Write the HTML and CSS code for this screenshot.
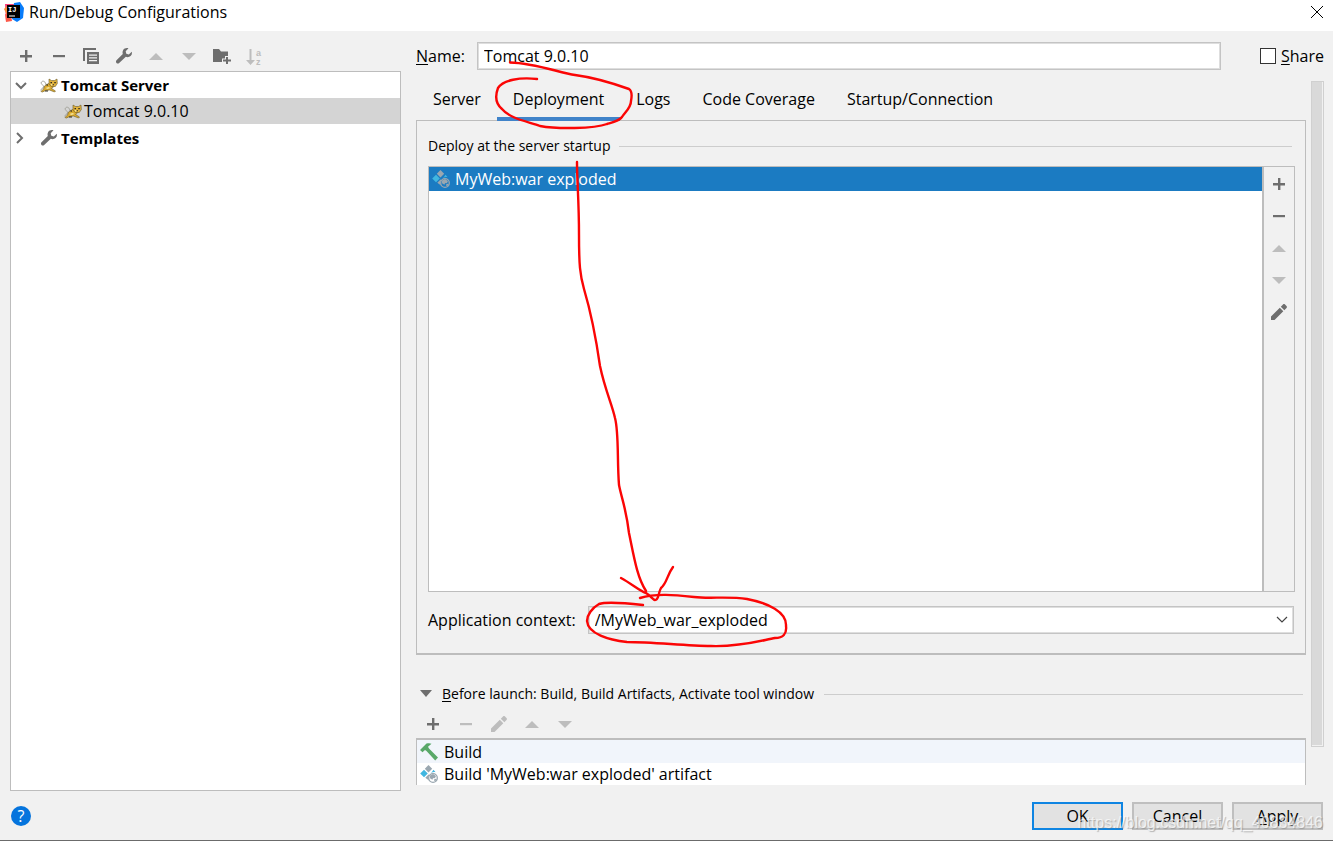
FILE: index.html
```html
<!DOCTYPE html>
<html lang="en">
<head>
    <meta charset="UTF-8">
    <meta name="viewport" content="width=device-width, initial-scale=1.0">
    <title>Run/Debug Configurations</title>
    <link rel="stylesheet" href="styles.css">
</head>
<body>

    <!-- Shared icons -->
    <svg class="hidden">
        <symbol id="plus" viewBox="0 0 16 16"><path d="M7 2h2.4v5H14v2.4H9.4V14H7V9.400H2V7h5z" fill="currentColor"/></symbol>
        <symbol id="minus" viewBox="0 0 16 16"><path d="M2 7h12v2.200H2z" fill="currentColor"/></symbol>
        <symbol id="up" viewBox="0 0 16 16"><path d="M1 12L8 5l7 7z" fill="currentColor"/></symbol>
        <symbol id="down" viewBox="0 0 16 16"><path d="M1 5h14l-7 7z" fill="currentColor"/></symbol>
        <symbol id="copy" viewBox="0 0 16 16"><path d="M0 0h13v2H2v11H0z" fill="currentColor"/><path d="M4 4h12v12H4zM6 6.500v1.300h8V6.500zM6 9.300v1.300h8V9.300zM6 12v1.300h8V12z" fill="currentColor" fill-rule="evenodd"/></symbol>
        <symbol id="wrench" viewBox="0 0 16 16"><path d="M15.800 3.800L12.800 6.500 10.300 5.800 9.700 3.200 12.500.3C10.500-.4 8.300.2 7.200 2 6.400 3.300 6.400 4.700 6.800 6L.5 12.300c-.8.8-.7 1.900 0 2.700s1.900.8 2.700 0L9.800 8.800c1.600.7 3.500.4 4.800-.8 1.200-1.200 1.600-2.800 1.200-4.200z" fill="currentColor"/></symbol>
        <symbol id="pencil" viewBox="0 0 16 16"><path d="M0 12.500L8.800 3.700l3.500 3.500L3.500 16H0zM9.800 2.700L12 .5c.6-.6 1.400-.6 2 0L15.500 2c.6.600.6 1.400 0 2l-2.200 2.200z" fill="currentColor"/></symbol>
        <symbol id="tomcat" viewBox="0 0 18 16">
            <path d="M6 8C6 5 3 3 1.500 5S4 8 3.500 10 1 11 .8 13.500" fill="none" stroke="#a3a39b"/>
            <path d="M4.500 9l4-2.500 2 .5 3 3-2 1.500 4 2.500-1 1-5-2-4 .5L2.500 15l-1.500-.5L3.500 12z" fill="#d9a92f" stroke="#6b5a2a" stroke-width=".6"/>
            <path d="M9 2l2.500 1.500h3L17 2l.3 4.500-2 3h-4L9 7z" fill="#e2b33c" stroke="#6b5a2a" stroke-width=".6"/>
            <path d="M10.500 5H12v1.300h-1.500zM14.300 5h1.500v1.300h-1.500zM12.500 7.300H14v1h-1.500zM6 8l1.500-1 .5 2zM5 13.500h3v1H5z" fill="#2e2a20"/>
            <path d="M5.500 11l3-1 2 1-3 1zM11 7h1.300v1.500H11z" fill="#f8e69a"/>
        </symbol>
        <symbol id="artifact" viewBox="0 0 18 18">
            <path d="M8.500 0l3.700 3.700-3.700 3.700-3.700-3.700z" fill="#9aa7b0"/>
            <path d="M4 4.700l3.800 3.800L4 12.300.2 8.500zM13.500 4.800l2.200 2.400c-1.600-.4-3.300 0-4.700 1z" fill="#40b6e0"/>
            <path d="M8.500 9.500l1 .6c-1.200 1.500-1.300 3.600-.5 5.400L5.300 12.700z" fill="#9aa7b0"/>
            <circle cx="13" cy="13" r="4.300" fill="none" stroke="#9aa7b0" stroke-width="1.300"/>
            <path d="M10 10.500l3-1.500 3 2-1 2-2 .2-.6 1.600-2.400-1.500zM14.500 13.700l2.300.2-1.500 2.400-1.300-.7z" fill="#9aa7b0"/>
        </symbol>
    </svg>

    <!-- Title bar -->
    <header class="title-bar">
        <svg class="app-icon" viewBox="0 0 20 20">
            <path d="M1 2l9 0-3 16-5 1z" fill="#f9417a"/>
            <path d="M10 1l6-1 4 6-1 10-6 4-5-3z" fill="#087cfa"/>
            <path d="M1 12l6 2 1 5-6 1z" fill="#fc5a4a"/>
            <path d="M0 7l3-3v9z" fill="#fb8a38"/>
            <rect x="3" y="3" width="13" height="13"/>
            <text class="app-letters" x="4" y="10">IJ</text>
            <path d="M5 13.500h6v1H5z" fill="#fff"/>
        </svg>
        <span>Run/Debug Configurations</span>
        <button class="close-button" aria-label="Close">
            <svg viewBox="0 0 12 12"><path d="M0 0l12 12M12 0L0 12" stroke="#000"/></svg>
        </button>
    </header>

    <main class="content">

        <!-- Configurations tree -->
        <aside class="sidebar">
            <div class="toolbar side-tools">
                <button class="tool" aria-label="Add"><svg><use href="#plus"/></svg></button>
                <button class="tool" aria-label="Remove"><svg><use href="#minus"/></svg></button>
                <button class="tool" aria-label="Copy"><svg><use href="#copy"/></svg></button>
                <button class="tool" aria-label="Edit templates"><svg><use href="#wrench"/></svg></button>
                <button class="tool" aria-label="Move up" disabled><svg><use href="#up"/></svg></button>
                <button class="tool" aria-label="Move down" disabled><svg><use href="#down"/></svg></button>
                <button class="tool" aria-label="New folder">
                    <svg class="wide" viewBox="0 0 18 16"><path d="M0 1h6l2 2.500h7V8h-3v2.500H9V14H0z" fill="currentColor"/><path d="M13 9h2v2.500h3v2h-3V16h-2v-2.500h-3v-2h3z" fill="currentColor"/></svg>
                </button>
                <button class="tool" aria-label="Sort" disabled>
                    <svg class="sort-icon" viewBox="0 0 16 18"><path d="M3.500 1h2v11H9l-4.500 5L0 12h3.500z" fill="currentColor"/><text class="sort-letters" x="10" y="8">a</text><text class="sort-letters" x="10" y="17">z</text></svg>
                </button>
            </div>
            <ul class="tree">
                <li class="tree-row bold">
                    <svg class="arrow" viewBox="0 0 12 12"><path d="M1 4l5 5 5-5" fill="none" stroke="#6e6e6e" stroke-width="2"/></svg>
                    <svg class="tree-icon"><use href="#tomcat"/></svg>Tomcat Server
                </li>
                <li class="tree-row child selected"><svg class="tree-icon"><use href="#tomcat"/></svg>Tomcat 9.0.10</li>
                <li class="tree-row bold">
                    <svg class="arrow" viewBox="0 0 12 12"><path d="M2 1l5 5-5 5" fill="none" stroke="#6e6e6e" stroke-width="2"/></svg>
                    <svg class="tree-icon grey"><use href="#wrench"/></svg>Templates
                </li>
            </ul>
        </aside>

        <!-- Selected configuration -->
        <section class="editor">
            <div class="name-row">
                <label class="name-label" for="configName"><u>N</u>ame:</label>
                <input type="text" id="configName" class="input-field" value="Tomcat 9.0.10">
                <label class="share"><input type="checkbox" class="checkbox"><span><u>S</u>hare</span></label>
            </div>

            <div class="scroll-area">
                <div class="scroll-content">
                    <nav class="tabs">
                        <button class="tab">Server</button>
                        <button class="tab active">Deployment</button>
                        <button class="tab">Logs</button>
                        <button class="tab">Code Coverage</button>
                        <button class="tab">Startup/Connection</button>
                    </nav>

                    <div class="panel">
                        <h2 class="section-title">Deploy at the server startup</h2>
                        <div class="deploy">
                            <ul class="deploy-list">
                                <li class="deploy-item"><svg class="item-icon"><use href="#artifact"/></svg>MyWeb:war exploded</li>
                            </ul>
                            <div class="deploy-tools">
                                <button class="tool" aria-label="Add artifact"><svg><use href="#plus"/></svg></button>
                                <button class="tool" aria-label="Remove artifact"><svg><use href="#minus"/></svg></button>
                                <button class="tool" aria-label="Artifact up" disabled><svg><use href="#up"/></svg></button>
                                <button class="tool" aria-label="Artifact down" disabled><svg><use href="#down"/></svg></button>
                                <button class="tool" aria-label="Edit artifact"><svg><use href="#pencil"/></svg></button>
                            </div>
                        </div>
                        <div class="context-row">
                            <label for="context">Application context:</label>
                            <div class="combo">
                                <select id="context" class="input-field">
                                    <option>/MyWeb_war_exploded</option>
                                </select>
                                <svg class="chevron" viewBox="0 0 12 8"><path d="M1 1l5 5 5-5" fill="none" stroke="#444" stroke-width="1.200"/></svg>
                            </div>
                        </div>
                    </div>

                    <!-- Before launch -->
                    <h2 class="section-title before-title">
                        <svg class="fold" viewBox="0 0 12 8"><path d="M0 0h12L6 7z" fill="#6e6e6e"/></svg>
                        <span><u>B</u>efore launch: Build, Build Artifacts, Activate tool window</span>
                    </h2>
                    <div class="toolbar before-tools">
                        <button class="tool" aria-label="Add task"><svg><use href="#plus"/></svg></button>
                        <button class="tool" aria-label="Remove task" disabled><svg><use href="#minus"/></svg></button>
                        <button class="tool" aria-label="Edit task" disabled><svg><use href="#pencil"/></svg></button>
                        <button class="tool" aria-label="Task up" disabled><svg><use href="#up"/></svg></button>
                        <button class="tool" aria-label="Task down" disabled><svg><use href="#down"/></svg></button>
                    </div>
                    <ul class="task-list">
                        <li class="task striped">
                            <svg class="item-icon" viewBox="0 0 18 18"><path d="M0 7L6.500.5c2-.5 3.500-.5 5 .2L8 3.700l1 1.800 9 9-2.800 3L6.500 8 5 7 2.500 9.300z" fill="#59a869"/></svg>Build
                        </li>
                        <li class="task"><svg class="item-icon"><use href="#artifact"/></svg>Build 'MyWeb:war exploded' artifact</li>
                    </ul>
                </div>
                <div class="scrollbar"></div>
            </div>
        </section>
    </main>

    <footer class="footer">
        <button class="help-button" aria-label="Help">?</button>
        <button class="button primary">OK</button>
        <button class="button">Cancel</button>
        <button class="button"><u>A</u>pply</button>
        <span class="watermark">https://blog.csdn.net/qq_40834846</span>
    </footer>

    <!-- Hand drawn marks -->
    <svg class="marks" width="1333" height="841" viewBox="0 0 1333 841">
        <path d="M537 79C520 77 503 80 498 88C495 96 496 104 502 109C510 119 530 122 540 126C556 129 594 129 607 124C614 122 619 121 622 117C625 112 631 108 631 101C632 96 632 91 629 89C615 84 598 78 575 75C560 73 535 63 510 62.500"/>
        <path d="M577 162C577 182 579 200 579 235C579 265 580 275 584 289C592 316 597 345 600 366C605 390 612 404 615 418C619 433 617 460 619 485C622 500 626 508 629 533C634 557 637 577 646 591"/>
        <path d="M621 578C632 584 641 592 646 593C651 596 653 600 655 600C659 600 658 593 661 588C667 583 667 575 673 567"/>
        <path d="M643 605C625 603 605 602 599 604C592 608 587 615 587 621C588 634 609 640 627 642C655 642 685 646 711 646C742 647 763 640 775 638C783 638 787 634 786 626C787 612 768 603 747 599C728 596 710 599 694 597C675 595 656 593 640 598"/>
    </svg>

</body>
</html>
```
FILE: styles.css
```css
* {
    box-sizing: border-box;
}
body {
    font-family: "Open Sans", "Noto Sans", sans-serif;
    font-size: 16px;
    line-height: 20px;
    color: #000;
    background-color: #f1f1f1;
    margin: 0;
    min-height: 100vh;
    display: flex;
    flex-direction: column;
    position: relative;
}
button, input, select {
    font: inherit;
    color: inherit;
}
button {
    padding: 0;
    border: none;
    background: none;
}
ul {
    list-style: none;
    margin: 0;
    padding: 0;
}
u {
    text-underline-offset: 2px;
    text-decoration-skip-ink: none;
}
.hidden {
    display: none;
}
.title-bar {
    display: flex;
    align-items: center;
    gap: 5px;
    height: 31px;
    padding: 0 10px 7px 4px;
    background: #fff;
}
.app-icon {
    width: 20px;
    height: 20px;
}
.app-letters {
    font: bold 7px "Liberation Mono", monospace;
    fill: #fff;
}
.close-button {
    width: 12px;
    height: 12px;
    margin-left: auto;
}
.close-button svg {
    display: block;
}
.content {
    flex: 1;
    display: flex;
    gap: 15px;
    padding: 11px 9px 0 10px;
}
.sidebar {
    width: 391px;
    display: flex;
    flex-direction: column;
}
.toolbar {
    display: flex;
    align-items: center;
}
.tool {
    width: 16px;
    height: 16px;
    color: #6e6e6e;
}
.tool:disabled {
    color: #bdbdbd;
}
.tool svg {
    display: block;
    width: 16px;
    height: 16px;
}
.tool .wide {
    width: 18px;
}
.tool .sort-icon {
    height: 18px;
}
.side-tools {
    width: 252px;
    height: 29px;
    padding: 0 0 2px 8px;
    justify-content: space-between;
}
.sort-letters {
    font: bold 9px "Liberation Sans", sans-serif;
    fill: currentColor;
}
.tree {
    flex: 1;
    background: #fff;
    border: 1px solid #bdbdbd;
}
.tree-row {
    display: flex;
    align-items: center;
    height: 26px;
    padding-left: 4px;
}
.tree-row:last-child {
    height: 28px;
}
.arrow {
    width: 12px;
    height: 12px;
    margin-right: 13px;
}
.tree-icon {
    width: 18px;
    height: 16px;
    margin-right: 2px;
}
.bold .tree-icon {
    margin-right: 3px;
}
.grey {
    color: #6e6e6e;
}
.bold {
    font-size: 15px;
    font-weight: bold;
}
.child {
    padding-left: 53px;
}
.selected {
    background: #d4d4d4;
}
.editor {
    flex: 1;
    min-width: 0;
    display: flex;
    flex-direction: column;
    gap: 11px;
}
.name-row {
    display: flex;
    align-items: center;
}
.name-label {
    width: 61px;
}
.input-field {
    flex: 1;
    min-width: 0;
    height: 28px;
    padding: 0 6px;
    background: #fff;
    border: 1px solid #c4c4c4;
    box-shadow: inset 0 0 0 1px #dedede;
    border-radius: 0;
    outline: none;
    appearance: none;
}
.share {
    display: flex;
    align-items: center;
    gap: 5px;
    margin-left: 39px;
}
.checkbox {
    appearance: none;
    width: 16px;
    height: 16px;
    margin: 0;
    background: #fff;
    border: 1px solid #333;
}
.scroll-area {
    flex: 1;
    display: flex;
    gap: 5px;
    margin-bottom: 6px;
}
.scroll-content {
    flex: 1;
    min-width: 0;
    display: flex;
    flex-direction: column;
}
.scrollbar {
    width: 13px;
    margin-bottom: 38px;
    background: #d9d9d9;
    border: 1px solid #d0d0d0;
    box-shadow: inset -1px -1px #f1f1f1;
}
.tabs {
    display: flex;
    height: 40px;
    margin-bottom: -1px;
    padding-left: 1px;
    z-index: 1;
}
.tab {
    padding: 0 16px;
    border-bottom: 4px solid transparent;
}
.active {
    border-bottom-color: #4083c9;
}
.panel {
    flex: 1;
    display: flex;
    flex-direction: column;
    padding: 15px 10px 19px 11px;
    border: 1px solid #bdbdbd;
    border-bottom-width: 2px;
}
.section-title {
    display: flex;
    align-items: center;
    gap: 9px;
    margin: 0 3px 10px 0;
    font-size: 14px;
    font-weight: normal;
}
.section-title::after {
    content: "";
    flex: 1;
    height: 1px;
    background: #cdcdcd;
}
.deploy {
    flex: 1;
    display: flex;
    border: 1px solid #bdbdbd;
}
.deploy-list {
    flex: 1;
    background: #fff;
    border-right: 2px solid #bdbdbd;
}
.deploy-item {
    display: flex;
    align-items: center;
    gap: 5px;
    height: 24px;
    padding-left: 3px;
    color: #fff;
    background: #1b7bc2;
}
.item-icon {
    width: 18px;
    height: 18px;
}
.deploy-tools {
    display: flex;
    flex-direction: column;
    gap: 16px;
    width: 30px;
    padding: 9px 7px;
}
.context-row {
    display: flex;
    align-items: center;
    gap: 12px;
    margin-top: 14px;
    padding-right: 1px;
}
.combo {
    flex: 1;
    display: flex;
    position: relative;
}
.chevron {
    position: absolute;
    right: 6px;
    top: 10px;
    width: 12px;
    height: 8px;
    pointer-events: none;
}
.before-title {
    gap: 10px;
    margin: 29px 3px 12px 4px;
}
.fold {
    width: 12px;
    height: 8px;
}
.before-tools {
    gap: 17px;
    height: 16px;
    margin-bottom: 6px;
    padding-left: 9px;
}
.task-list {
    border: 1px solid #bdbdbd;
    border-top-width: 2px;
    border-bottom: none;
    background: #fff;
}
.task {
    display: flex;
    align-items: center;
    gap: 6px;
    height: 23px;
    padding-left: 3px;
}
.task:last-child {
    height: 22px;
}
.striped {
    background: #f1f5fb;
}
.footer {
    display: flex;
    align-items: center;
    gap: 9px;
    height: 50px;
    padding: 0 10px 0 11px;
    border-bottom: 1px solid #6b6b6b;
    position: relative;
}
.help-button {
    width: 20px;
    height: 20px;
    margin-right: auto;
    border-radius: 50%;
    color: #fff;
    background: #0574dd;
}
.button {
    width: 91px;
    height: 28px;
    background: #e2e2e2;
    border: 2px solid #bfbfbf;
}
.primary {
    border-color: #0f85e2;
}
.watermark {
    position: absolute;
    right: 10px;
    bottom: 7px;
    font-family: "Liberation Sans", sans-serif;
    color: rgba(255, 255, 255, 0.7);
    text-shadow: 1px 1px 1px rgba(120, 120, 120, 0.5);
    pointer-events: none;
}
.marks {
    position: absolute;
    left: 0;
    top: 0;
    pointer-events: none;
    z-index: 2;
}
.marks path {
    fill: none;
    stroke: #fb0505;
    stroke-width: 2.4;
    stroke-linecap: round;
}
```
